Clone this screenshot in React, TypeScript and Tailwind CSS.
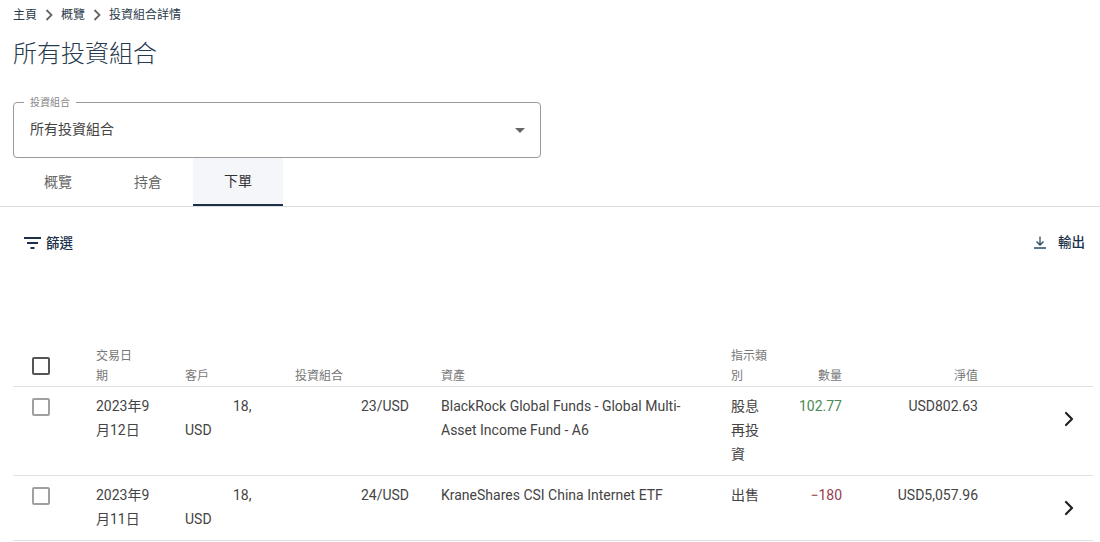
import { ChevronRight } from "lucide-react"

const fontStack = "font-['Roboto','Noto_Sans_CJK_TC',sans-serif]"
const rowGrid = "grid grid-cols-[83px_89px_110px_146px_290px_42px_69px_136px_1fr]"

interface OrderRow {
  date: string
  day: string
  account: string
  type: string
  qty: string
  qtyColor: string
  nav: string
  asset: string
  height: string
}

const orders: OrderRow[] = [
  {
    date: "2023年9",
    day: "月12日",
    account: "23/USD",
    asset: "BlackRock Global Funds - Global Multi-Asset Income Fund - A6",
    type: "股息再投資",
    qty: "102.77",
    qtyColor: "text-[#4a8a55]",
    nav: "USD802.63",
    height: "h-[89px]",
  },
  {
    date: "2023年9",
    day: "月11日",
    account: "24/USD",
    asset: "KraneShares CSI China Internet ETF",
    type: "出售",
    qty: "−180",
    qtyColor: "text-[#96404f]",
    nav: "USD5,057.96",
    height: "h-[65px]",
  },
]

function Crumb() {
  return (
    <svg width="8" height="12" viewBox="0 0 8 12" className="mx-2 shrink-0">
      <path d="M1.5 1 L6.5 6 L1.5 11" fill="none" stroke="#666" strokeWidth="1.8" />
    </svg>
  )
}

function Box({ strong }: { strong?: boolean }) {
  return (
    <div
      className={
        strong
          ? "ml-[19px] h-[18px] w-[18px] rounded-[2px] border-2 border-[#555]"
          : "ml-[19px] h-[18px] w-[18px] rounded-[2px] border-2 border-[#a0a0a0]"
      }
    />
  )
}

function Row({ order }: { order: OrderRow }) {
  return (
    <div className={`${rowGrid} ${order.height} border-b border-[#e0e0e0] pt-[7px] text-sm leading-6 text-[#444]`}>
      <div className="pt-1">
        <Box />
      </div>
      <div className="pr-4">
        {order.date}
        <br />
        {order.day}
      </div>
      <div>
        <span className="ml-12">18,</span>
        <br />
        USD
      </div>
      <div className="pr-8 text-right">{order.account}</div>
      <div className="pr-4">{order.asset}</div>
      <div className="w-9">{order.type}</div>
      <div className={`text-right ${order.qtyColor}`}>{order.qty}</div>
      <div className="text-right">{order.nav}</div>
      <div className="flex justify-end pt-[13px] pr-[12px]">
        <ChevronRight size={24} strokeWidth={2.2} className="text-[#222]" />
      </div>
    </div>
  )
}

export default function App() {
  return (
    <div className={`h-[542px] w-[1100px] overflow-hidden bg-white ${fontStack}`}>
      <div className="flex h-[30px] items-center px-[13px] text-xs text-[#2d3b4a]">
        主頁
        <Crumb />
        概覽
        <Crumb />
        投資組合詳情
      </div>
      <h1 className="h-[48px] px-[13px] text-2xl leading-[48px] font-light text-[#27394d]">所有投資組合</h1>

      <div className="relative mx-[13px] mt-6 flex h-14 w-[528px] items-center justify-between rounded border border-[#9a9a9a] pr-[15px] pl-4 text-sm text-[#444]">
        <span className="absolute -top-[6px] left-[10px] bg-white px-[6px] text-[10px] leading-3 text-[#888]">投資組合</span>
        <span className="-mt-0.5">所有投資組合</span>
        <svg width="10" height="5" viewBox="0 0 10 5">
          <path d="M0 0 H10 L5 5 Z" fill="#666" />
        </svg>
      </div>

      <div className="flex h-[49px] border-b border-[#dddddd] pl-[13px] text-sm">
        <div className="flex w-[90px] items-center justify-center text-[#666]">概覽</div>
        <div className="flex w-[90px] items-center justify-center text-[#666]">持倉</div>
        <div className="flex w-[90px] items-center justify-center border-b-2 border-[#1c3049] bg-[#f4f6f9] text-[#333]">下單</div>
      </div>

      <div className="flex h-[138px] items-start justify-between pt-[26px] pr-[15px] pl-6 text-[13.5px] font-medium text-[#1c3049]">
        <div className="flex h-5 items-center gap-[5px]">
          <svg width="17" height="12" viewBox="0 0 17 12">
            <path d="M0 1 H17 M3 6 H14 M6.5 11 H10.5" stroke="#1c3049" strokeWidth="2" fill="none" />
          </svg>
          篩選
        </div>
        <div className="-mt-px flex h-5 items-center gap-3">
          <svg width="12" height="13" viewBox="0 0 12 13">
            <path d="M6 0.5 V9 M2.5 5.5 L6 9 L9.5 5.5 M0 12 H12" stroke="#2a4a68" strokeWidth="1.3" fill="none" />
          </svg>
          輸出
        </div>
      </div>

      <div className="ml-[13px] w-[1080px]">
        <div className={`${rowGrid} h-[42px] items-end border-b border-[#e0e0e0] text-xs leading-5 text-[#777]`}>
          <div className="mb-[11px]">
            <Box strong />
          </div>
          <div className="w-9">交易日期</div>
          <div>客戶</div>
          <div>投資組合</div>
          <div>資產</div>
          <div className="w-9">指示類別</div>
          <div className="text-right">數量</div>
          <div className="text-right">淨值</div>
          <div />
        </div>
        {orders.map((order) => (
          <Row key={order.day} order={order} />
        ))}
      </div>
    </div>
  )
}
